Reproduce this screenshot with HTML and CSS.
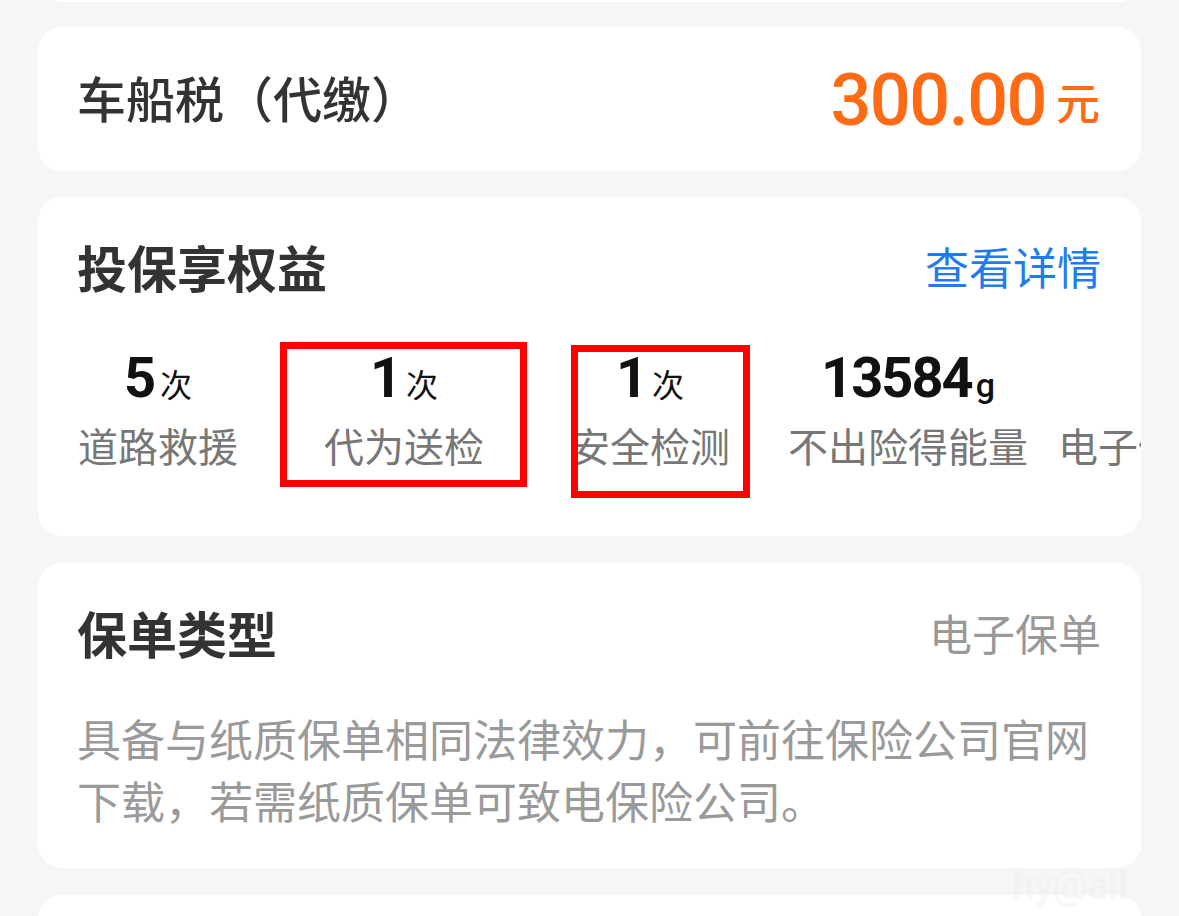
FILE: index.html
```html
<!DOCTYPE html>
<html lang="zh-CN">
<head>
<meta charset="utf-8">
<title>保单详情</title>
<link rel="stylesheet" href="styles.css">
</head>
<body>
<div class="page">
  <div class="card card-prev"></div>

  <div class="card card-tax">
    <div class="tax-title">车船税（代缴）</div>
    <div class="amount"><span class="amount-num">300.00</span><span class="amount-unit">元</span></div>
  </div>

  <div class="card card-benefit">
    <div class="head">
      <div class="title">投保享权益</div>
      <div class="link">查看详情</div>
    </div>
    <div class="benefits">
      <div class="benefit"><div class="num"><span class="n">5</span><span class="u">次</span></div><div class="label">道路救援</div></div>
      <div class="benefit"><div class="num"><span class="n">1</span><span class="u">次</span></div><div class="label">代为送检</div></div>
      <div class="benefit"><div class="num"><span class="n">1</span><span class="u">次</span></div><div class="label">安全检测</div></div>
      <div class="benefit"><div class="num"><span class="n">13584</span><span class="g">g</span></div><div class="label">不出险得能量</div></div>
      <div class="benefit"><div class="num"></div><div class="label">电子保单服务</div></div>
      <div class="mark mark-1"></div>
      <div class="mark mark-2"></div>
    </div>
  </div>

  <div class="card card-policy">
    <div class="head">
      <div class="title">保单类型</div>
      <div class="value">电子保单</div>
    </div>
    <p class="desc">具备与纸质保单相同法律效力，可前往保险公司官网下载，若需纸质保单可致电保险公司。</p>
  </div>

  <div class="card card-next"></div>
  <div class="watermark">hy@all</div>
</div>
</body>
</html>
```
FILE: styles.css
```css
html, body {
  margin: 0;
  padding: 0;
  background: #f6f6f6;
}
body {
  width: 1179px;
  height: 916px;
  overflow: hidden;
  font-family: "Noto Sans CJK SC", "Noto Sans", sans-serif;
}
.page {
  position: relative;
  padding: 0 38px;
  height: 916px;
  overflow: hidden;
}
.card {
  background: #fff;
  border-radius: 24px;
  box-sizing: border-box;
}
.card-prev {
  height: 100px;
  margin-top: -98px;
}
.card-tax {
  margin-top: 25px;
  height: 144px;
  padding: 0 41px 0 39px;
  display: flex;
  align-items: center;
  justify-content: space-between;
}
.tax-title {
  font-size: 49px;
  font-weight: 500;
  color: #333;
  margin-top: -6px;
}
.amount {
  display: flex;
  align-items: center;
  color: #ff6a14;
  margin-top: 4px;
}
.amount-num {
  font-family: "Roboto", "Liberation Sans", sans-serif;
  font-weight: 500;
  font-size: 72px;
  letter-spacing: -1.5px;
  line-height: 1;
}
.amount-unit {
  font-size: 44px;
  font-weight: 500;
  margin-left: 10px;
  line-height: 1;
}

.card-benefit {
  margin-top: 26px;
  height: 339px;
  padding-top: 41px;
  overflow: hidden;
}
.head {
  display: flex;
  align-items: center;
  justify-content: space-between;
  padding: 0 40px 0 39px;
  height: 56px;
}
.title {
  font-size: 50px;
  font-weight: 700;
  color: #333;
  line-height: 56px;
}
.link {
  font-size: 44px;
  color: #1f7cf0;
  line-height: 56px;
}
.benefits {
  position: relative;
  display: flex;
  margin-top: 54px;
  margin-left: -3px;
}
.benefit {
  flex: 0 0 auto;
  min-width: 246px;
  padding: 0 15px;
  box-sizing: border-box;
  text-align: center;
  white-space: nowrap;
}
.num {
  display: flex;
  justify-content: center;
  align-items: baseline;
  height: 60px;
  color: #111;
}
.n {
  font-family: "Roboto", "Liberation Sans", sans-serif;
  font-weight: 700;
  font-size: 56px;
  letter-spacing: -2px;
  line-height: 60px;
}
.u {
  font-size: 32px;
  line-height: 32px;
  margin-left: 6px;
}
.g {
  font-family: "Roboto", "Liberation Sans", sans-serif;
  font-weight: 500;
  font-size: 34px;
  line-height: 34px;
  margin-left: 4px;
}
.label {
  margin-top: 11px;
  font-size: 40px;
  line-height: 52px;
  color: #777;
}
.mark {
  position: absolute;
  border: 7px solid #ff0000;
  box-sizing: border-box;
}
.mark-1 {
  left: 245px;
  top: -6px;
  width: 247px;
  height: 145px;
}
.mark-2 {
  left: 536px;
  top: -3px;
  width: 179px;
  height: 153px;
}

.card-policy {
  margin-top: 27px;
  height: 305px;
  padding-top: 41px;
}
.value {
  font-size: 43px;
  color: #999;
  line-height: 56px;
}
.desc {
  margin: 47px 0 0 0;
  padding: 0 40px 0 39px;
  font-size: 44px;
  line-height: 62px;
  color: #9a9a9a;
}
.card-next {
  margin-top: 27px;
  height: 120px;
}
.watermark {
  position: absolute;
  left: 1012px;
  top: 862px;
  font-family: "Roboto", "Liberation Sans", sans-serif;
  font-weight: 700;
  font-size: 40px;
  color: rgba(238, 238, 238, 0.45);
  letter-spacing: -1px;
}
```
